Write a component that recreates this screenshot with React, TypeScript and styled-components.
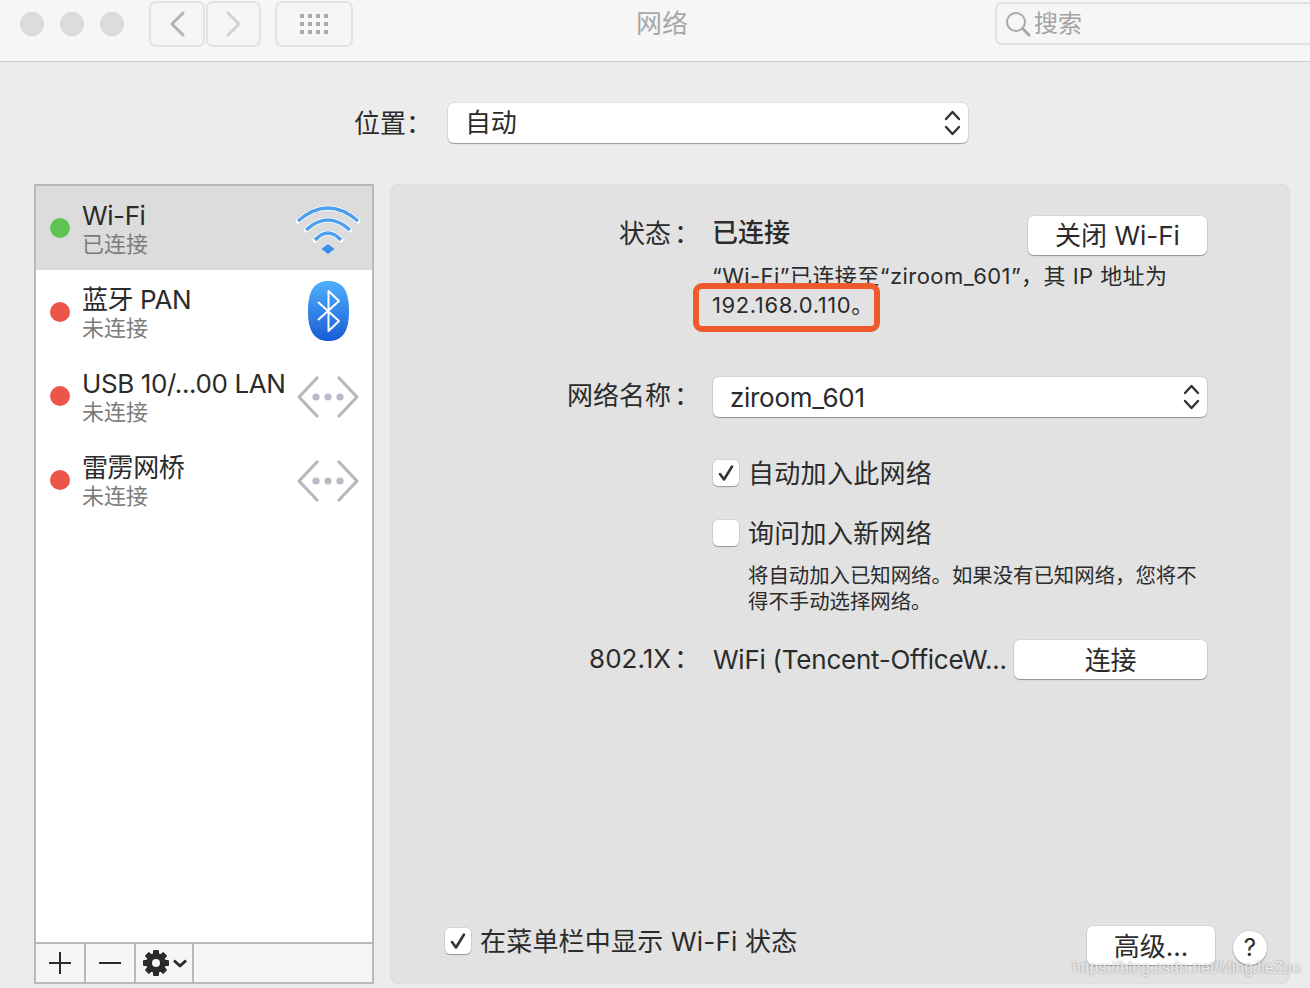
import React from 'react';
import styled, { createGlobalStyle } from 'styled-components';

const GlobalStyle = createGlobalStyle`
  html, body {
    margin: 0;
    padding: 0;
    background: #ececec;
  }
  * {
    box-sizing: border-box;
  }
`;

const Page = styled.div`
  position: relative;
  width: 1310px;
  height: 988px;
  overflow: hidden;
  background: #ececec;
  color: #2b2b2b;
  font-family: Inter, "Noto Sans CJK SC", sans-serif;
  font-size: 26px;
`;

const TitleBar = styled.header`
  display: flex;
  align-items: flex-start;
  height: 62px;
  padding: 1px 0 0 20px;
  background: #f6f6f6;
  border-bottom: 1px solid #cfcfcf;
`;

const Lights = styled.div`
  display: flex;
  gap: 16px;
  margin: 11px 25px 0 0;
`;

const Light = styled.span`
  width: 24px;
  height: 24px;
  border-radius: 50%;
  background: #dcdcdc;
  border: 1px solid #d2d2d2;
`;

const ToolButton = styled.div<{ $width: number }>`
  display: flex;
  align-items: center;
  justify-content: center;
  width: ${p => p.$width}px;
  height: 46px;
  margin-right: 1px;
  border: 2px solid #e3e3e3;
  border-radius: 7px;
  background: #f6f6f6;
`;

const GridButton = styled(ToolButton)`
  margin-left: 13px;
`;

const GridDots = styled.div`
  display: grid;
  grid-template-columns: repeat(4, 4px);
  gap: 4px;
`;

const GridDot = styled.span`
  height: 4px;
  background: #ababab;
`;

const WindowTitle = styled.div`
  flex: 1;
  min-width: 0;
  padding-right: 25px;
  text-align: center;
  color: #a8a8a8;
  font-size: 26px;
  line-height: 46px;
`;

const SearchField = styled.div`
  display: flex;
  flex-shrink: 0;
  align-items: center;
  gap: 3px;
  width: 320px;
  height: 43px;
  margin: 1px -5px 0 0;
  padding-left: 8px;
  border: 2px solid #e3e3e3;
  border-radius: 7px;
  color: #a3a3a3;
  font-size: 24px;
  line-height: 38px;
`;

const LocationRow = styled.div`
  display: flex;
  align-items: center;
  height: 40px;
  margin: 41px 0;
  padding-left: 354px;
`;

const LocationLabel = styled.div`
  width: 94px;
  padding-bottom: 3px;
`;

const SelectBox = styled.div<{ $width: number }>`
  display: flex;
  align-items: center;
  justify-content: space-between;
  width: ${p => p.$width}px;
  height: 40px;
  padding: 0 7px 0 17px;
  background: #fff;
  border-radius: 6px;
  box-shadow: 0 1px 1px rgba(0, 0, 0, 0.32), 0 0 0 1px rgba(0, 0, 0, 0.05);
  letter-spacing: -0.3px;
`;

const SelectCjk = styled.span`
  padding-bottom: 5px;
`;

const Main = styled.main`
  display: flex;
  gap: 16px;
  height: 800px;
  padding-left: 34px;
`;

const ServicePanel = styled.section`
  display: flex;
  flex-direction: column;
  width: 340px;
  background: #fff;
  border: 2px solid #b9b9b9;
`;

const ServiceList = styled.div`
  flex: 1;
`;

const ServiceRow = styled.div<{ $active?: boolean }>`
  display: flex;
  align-items: center;
  height: 84px;
  padding-left: 14px;
  background: ${p => (p.$active ? '#dcdcdc' : '#fff')};
`;

const StatusDot = styled.span<{ $on?: boolean }>`
  flex-shrink: 0;
  width: 20px;
  height: 20px;
  margin-right: 12px;
  border-radius: 50%;
  background: ${p => (p.$on ? '#5fc454' : '#ec5549')};
`;

const ServiceText = styled.div`
  flex: 1;
  min-width: 0;
  padding-top: 4px;
  white-space: nowrap;
`;

const ServiceName = styled.div`
  font-size: 26px;
  letter-spacing: -0.4px;
  line-height: 29px;
`;

const ServiceStatus = styled.div`
  color: #7c7c7c;
  font-size: 22px;
  line-height: 29px;
`;

const ServiceIcon = styled.div`
  display: flex;
  flex-shrink: 0;
  justify-content: center;
  width: 64px;
  margin-right: 12px;
`;

const ListFooter = styled.div`
  display: flex;
  height: 40px;
  background: #f6f6f6;
  border-top: 2px solid #b9b9b9;
`;

const FooterCell = styled.div<{ $width: number }>`
  display: flex;
  align-items: center;
  justify-content: center;
  gap: 3px;
  width: ${p => p.$width}px;
  border-right: 2px solid #b9b9b9;
`;

const DetailPanel = styled.section`
  display: flex;
  flex-direction: column;
  width: 900px;
  padding: 32px 83px 19px 0;
  background: #e2e2e2;
  border-radius: 8px;
  box-shadow: inset 0 0 0 1px #dedede;
`;

const FieldRow = styled.div<{ $top?: number }>`
  display: grid;
  grid-template-columns: 310px 1fr;
  column-gap: 13px;
  align-items: center;
  margin-top: ${p => p.$top ?? 0}px;
`;

const FieldLabel = styled.div`
  padding-bottom: 2px;
  line-height: 30px;
  text-align: right;
  white-space: nowrap;
`;

const Colon = styled.span`
  margin-left: 3px;
`;

const StatusValue = styled.div`
  display: flex;
  justify-content: space-between;
  align-items: flex-start;
  height: 39px;
  margin-left: -1px;
  line-height: 34px;
  font-weight: 500;
`;

const StatusLabel = styled(FieldLabel)`
  align-self: start;
  padding-bottom: 0;
  line-height: 36px;
`;

const Button = styled.div<{ $width: number }>`
  display: flex;
  align-items: center;
  justify-content: center;
  flex-shrink: 0;
  width: ${p => p.$width}px;
  height: 39px;
  background: #fff;
  border-radius: 6px;
  box-shadow: 0 1px 1px rgba(0, 0, 0, 0.32), 0 0 0 1px rgba(0, 0, 0, 0.05);
  font-weight: 400;
`;

const CjkButton = styled(Button)`
  padding-bottom: 3px;
`;

const IpNote = styled.div`
  margin: 7px 0 0 322px;
  font-size: 22px;
  letter-spacing: 0.45px;
  line-height: 28px;
  white-space: nowrap;
`;

const IpHighlight = styled.div`
  position: relative;
  width: 187px;
  height: 49px;
  margin: -7px 0 0 303px;
  padding-left: 13px;
  background: #e2e2e2;
  border: 6px solid #ee5a2b;
  border-radius: 9px;
  font-size: 22px;
  letter-spacing: 0.6px;
  line-height: 32px;
  white-space: nowrap;
`;

const CheckRow = styled.div<{ $top: number }>`
  display: flex;
  align-items: center;
  gap: 9px;
  height: 28px;
  margin: ${p => p.$top}px 0 0 323px;
`;

const CheckBox = styled.span`
  display: flex;
  align-items: center;
  justify-content: center;
  flex-shrink: 0;
  width: 26px;
  height: 26px;
  background: #fff;
  border-radius: 5px;
  box-shadow: 0 1px 1px rgba(0, 0, 0, 0.28), 0 0 0 1px rgba(0, 0, 0, 0.06);
`;

const CheckLabel = styled.span`
  margin-top: -3px;
  letter-spacing: 0.3px;
  white-space: nowrap;
`;

const BottomLabel = styled(CheckLabel)`
  margin-top: 1px;
  letter-spacing: 0.2px;
`;

const HelpText = styled.div`
  margin: 16px 0 0 358px;
  font-size: 20.4px;
  line-height: 26px;
`;

const ValueRow = styled.div`
  display: flex;
  align-items: center;
  justify-content: space-between;
  letter-spacing: -0.25px;
  white-space: nowrap;
`;

const BottomRow = styled.div`
  display: flex;
  align-items: center;
  margin: auto -60px 0 55px;
`;

const BottomCheck = styled.div`
  display: flex;
  align-items: center;
  gap: 9px;
  margin-bottom: 9px;
  line-height: 28px;
`;

const AdvancedButton = styled(CjkButton)`
  margin-left: auto;
  margin-right: 18px;
`;

const HelpButton = styled.div`
  display: flex;
  align-items: center;
  justify-content: center;
  width: 34px;
  height: 34px;
  margin-top: 4px;
  background: #fff;
  border-radius: 50%;
  box-shadow: 0 1px 1px rgba(0, 0, 0, 0.32), 0 0 0 1px rgba(0, 0, 0, 0.07);
  font-size: 24px;
`;

const Watermark = styled.div`
  position: absolute;
  left: 1072px;
  top: 959px;
  color: rgba(255, 255, 255, 0.75);
  font-family: "Liberation Sans", sans-serif;
  font-size: 15.9px;
  text-shadow: 0 0 2px rgba(110, 110, 110, 0.75);
  white-space: nowrap;
`;

const Chevron = ({ left, color }: { left?: boolean; color: string }) => (
  <svg width="16" height="26" viewBox="0 0 16 26" fill="none">
    <path
      d={left ? 'M14 2 L3 13 L14 24' : 'M2 2 L13 13 L2 24'}
      stroke={color}
      strokeWidth="3"
      strokeLinecap="round"
      strokeLinejoin="round"
    />
  </svg>
);

const Magnifier = () => (
  <svg width="26" height="26" viewBox="0 0 26 26" fill="none" stroke="#a8a8a8" strokeWidth="2">
    <circle cx="11" cy="11" r="9" />
    <path d="M17.5 17.5 L24 24" strokeWidth="3" strokeLinecap="round" />
  </svg>
);

const UpDown = () => (
  <svg width="17" height="28" viewBox="0 0 17 28" fill="none" stroke="#333" strokeWidth="2.4" strokeLinecap="round" strokeLinejoin="round">
    <path d="M2 10 L8.5 3 L15 10" />
    <path d="M2 18 L8.5 25 L15 18" />
  </svg>
);

const WifiIcon = () => {
  const arcs = ['M2 15 Q32 -11 62 15', 'M10 24 Q32 4 54 24', 'M19 34 Q32 20 45 34'];
  return (
    <svg width="64" height="51" viewBox="0 -3 64 51" fill="none">
      {arcs.map(d => (
        <path key={d} d={d} stroke="#fff" strokeWidth="5" strokeLinecap="round" />
      ))}
      {arcs.map(d => (
        <path key={d} d={d} stroke="#4b9fee" strokeWidth="3.4" strokeLinecap="butt" />
      ))}
      <path d="M32 38 L38.5 43 L32 48 L25.5 43 Z" fill="#3a8fec" />
    </svg>
  );
};

const BluetoothIcon = () => (
  <svg width="41" height="62" viewBox="0 0 41 62" fill="none">
    <defs>
      <linearGradient id="btBlue" x1="0" y1="0" x2="0" y2="1">
        <stop offset="0" stopColor="#4fb0fb" />
        <stop offset="1" stopColor="#1a5cd6" />
      </linearGradient>
    </defs>
    <path d="M20.5 0C35 0 41 10 41 30C41 50 35 60 20.5 60C6 60 0 50 0 30C0 10 6 0 20.5 0Z" fill="url(#btBlue)" />
    <path d="M10 21 L31 40 L20.5 50 V10 L31 20 L10 39" stroke="#fff" strokeWidth="2" strokeLinejoin="round" />
  </svg>
);

const NetworkIcon = () => (
  <svg width="62" height="44" viewBox="0 -2 62 44" fill="none">
    <path d="M20 2 L2 21 L20 40" stroke="#b4b8c0" strokeWidth="3.2" strokeLinecap="round" strokeLinejoin="round" />
    <path d="M42 2 L60 21 L42 40" stroke="#b4b8c0" strokeWidth="3.2" strokeLinecap="round" strokeLinejoin="round" />
    <circle cx="19" cy="21" r="3.6" fill="#b8bcc6" />
    <circle cx="31" cy="21" r="3.6" fill="#b8bcc6" />
    <circle cx="43" cy="21" r="3.6" fill="#b8bcc6" />
  </svg>
);

const LineGlyph = ({ plus }: { plus?: boolean }) => (
  <svg width="24" height="24" viewBox="0 0 24 24" stroke="#2b2b2b" strokeWidth="2">
    <path d="M1 12 H23" />
    {plus && <path d="M12 1 V23" />}
  </svg>
);

const GearGlyph = () => (
  <svg width="28" height="28" viewBox="0 0 28 28">
    {[0, 45, 90, 135].map(a => (
      <rect key={a} x="11" y="1" width="6" height="26" rx="1" fill="#2b2b2b" transform={`rotate(${a} 14 14)`} />
    ))}
    <circle cx="14" cy="14" r="7.5" fill="none" stroke="#2b2b2b" strokeWidth="5" />
    <circle cx="14" cy="14" r="4" fill="#f6f6f6" />
  </svg>
);

const SmallDown = () => (
  <svg width="14" height="9" viewBox="0 0 14 9" fill="none" stroke="#2b2b2b" strokeWidth="3" strokeLinejoin="round">
    <path d="M1 1.5 L7 7 L13 1.5" />
  </svg>
);

const Check = () => (
  <svg width="18" height="18" viewBox="0 0 18 18" fill="none" stroke="#333" strokeWidth="2.6" strokeLinecap="round" strokeLinejoin="round">
    <path d="M3 10 L7 15.5 L15 2.5" />
  </svg>
);

const services = [
  { name: 'Wi-Fi', status: '已连接', on: true, icon: <WifiIcon /> },
  { name: '蓝牙 PAN', status: '未连接', icon: <BluetoothIcon /> },
  { name: 'USB 10/...00 LAN', status: '未连接', icon: <NetworkIcon /> },
  { name: '雷雳网桥', status: '未连接', icon: <NetworkIcon /> },
];

const App = () => {
  return (
    <Page>
      <GlobalStyle />
      <TitleBar>
        <Lights>
          <Light />
          <Light />
          <Light />
        </Lights>
        <ToolButton $width={56}>
          <Chevron left color="#b4b4b4" />
        </ToolButton>
        <ToolButton $width={55}>
          <Chevron color="#d2d2d2" />
        </ToolButton>
        <GridButton $width={78}>
          <GridDots>
            {Array.from({ length: 12 }).map((_, i) => (
              <GridDot key={i} />
            ))}
          </GridDots>
        </GridButton>
        <WindowTitle>网络</WindowTitle>
        <SearchField>
          <Magnifier />
          搜索
        </SearchField>
      </TitleBar>

      <LocationRow>
        <LocationLabel>位置：</LocationLabel>
        <SelectBox $width={520}>
          <SelectCjk>自动</SelectCjk>
          <UpDown />
        </SelectBox>
      </LocationRow>

      <Main>
        <ServicePanel>
          <ServiceList>
            {services.map(s => (
              <ServiceRow key={s.name} $active={s.on}>
                <StatusDot $on={s.on} />
                <ServiceText>
                  <ServiceName>{s.name}</ServiceName>
                  <ServiceStatus>{s.status}</ServiceStatus>
                </ServiceText>
                <ServiceIcon>{s.icon}</ServiceIcon>
              </ServiceRow>
            ))}
          </ServiceList>
          <ListFooter>
            <FooterCell $width={50}>
              <LineGlyph plus />
            </FooterCell>
            <FooterCell $width={50}>
              <LineGlyph />
            </FooterCell>
            <FooterCell $width={58}>
              <GearGlyph />
              <SmallDown />
            </FooterCell>
          </ListFooter>
        </ServicePanel>

        <DetailPanel>
          <FieldRow>
            <StatusLabel>
              状态<Colon>：</Colon>
            </StatusLabel>
            <StatusValue>
              已连接
              <Button $width={179}>关闭 Wi-Fi</Button>
            </StatusValue>
          </FieldRow>
          <IpNote>“Wi-Fi”已连接至“ziroom_601”，其 IP 地址为</IpNote>
          <IpHighlight>192.168.0.110。</IpHighlight>

          <FieldRow $top={45}>
            <FieldLabel>
              网络名称<Colon>：</Colon>
            </FieldLabel>
            <SelectBox $width={494}>
              ziroom_601
              <UpDown />
            </SelectBox>
          </FieldRow>

          <CheckRow $top={42}>
            <CheckBox>
              <Check />
            </CheckBox>
            <CheckLabel>自动加入此网络</CheckLabel>
          </CheckRow>
          <CheckRow $top={32}>
            <CheckBox />
            <CheckLabel>询问加入新网络</CheckLabel>
          </CheckRow>
          <HelpText>
            将自动加入已知网络。如果没有已知网络，您将不
            <br />
            得不手动选择网络。
          </HelpText>

          <FieldRow $top={25}>
            <FieldLabel>
              802.1X<Colon>：</Colon>
            </FieldLabel>
            <ValueRow>
              WiFi (Tencent-OfficeW...
              <CjkButton $width={193}>连接</CjkButton>
            </ValueRow>
          </FieldRow>

          <BottomRow>
            <BottomCheck>
              <CheckBox>
                <Check />
              </CheckBox>
              <BottomLabel>在菜单栏中显示 Wi-Fi 状态</BottomLabel>
            </BottomCheck>
            <AdvancedButton $width={128}>高级...</AdvancedButton>
            <HelpButton>?</HelpButton>
          </BottomRow>
        </DetailPanel>
      </Main>

      <Watermark>https://blog.csdn.net/MingJieZuo</Watermark>
    </Page>
  );
};

export default App;
